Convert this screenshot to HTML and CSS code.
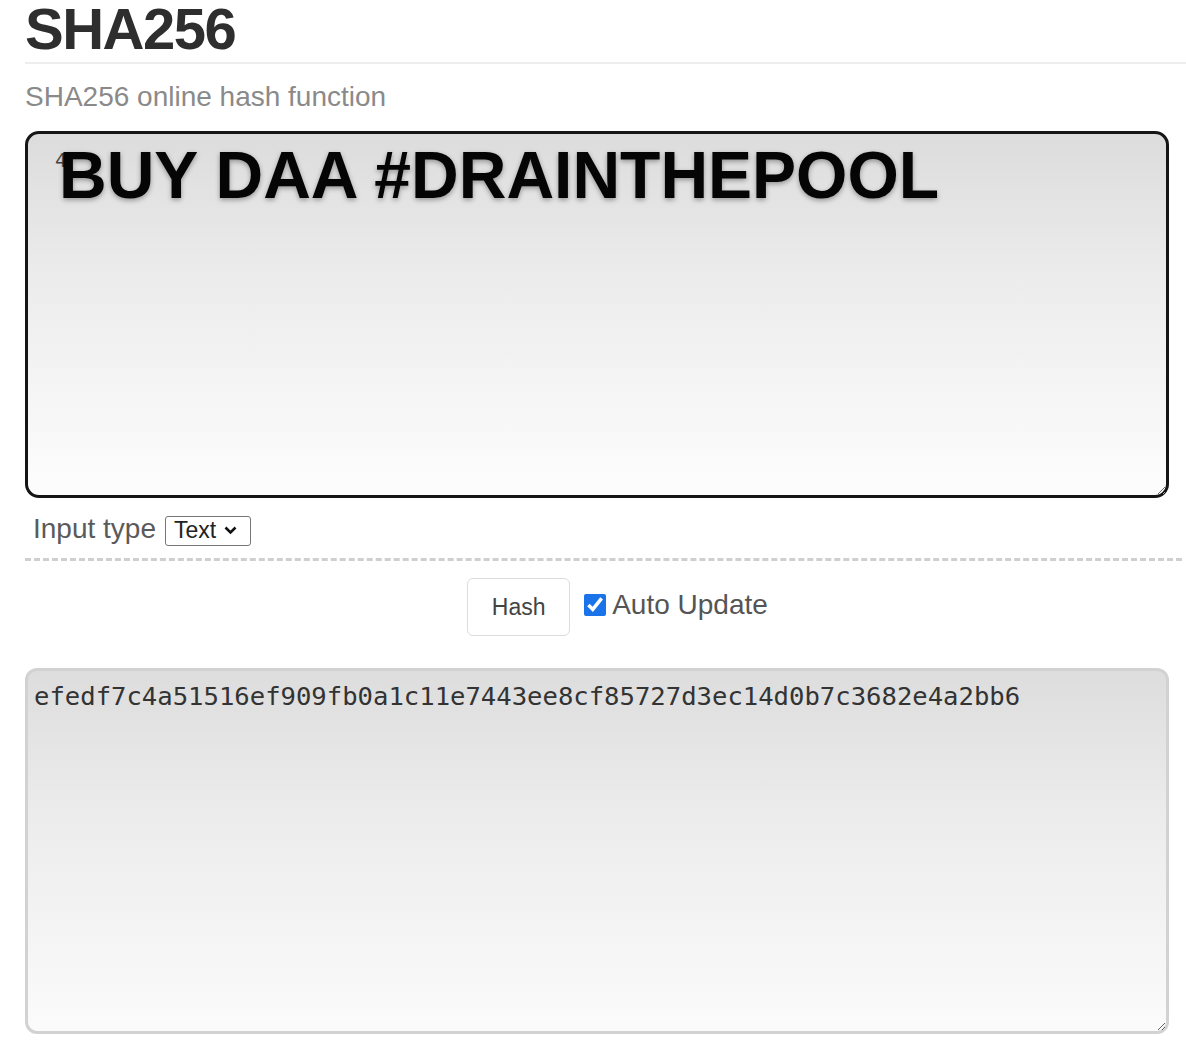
FILE: index.html
```html
<!DOCTYPE html>
<html>
<head>
<meta charset="utf-8">
<link rel="stylesheet" href="styles.css">
</head>
<body>
<main class="page">
  <h1 class="title">SHA256</h1>
  <p class="subtitle">SHA256 online hash function</p>
  <div class="input-wrap">
    <textarea class="input-area">4</textarea>
    <div class="overlay-text">BUY DAA #DRAINTHEPOOL</div>
  </div>
  <div class="type-row">
    <span class="type-label">Input type</span>
    <span class="select">Text
      <svg class="chev" width="13" height="9" viewBox="0 0 13 9"><path d="M1.5 1.5 L6.5 6.5 L11.5 1.5" fill="none" stroke="#111" stroke-width="2.6"/></svg>
    </span>
  </div>
  <div class="dash"></div>
  <div class="action-row">
    <button class="hash-btn">Hash</button>
    <label class="auto"><input type="checkbox" class="check" checked><span>Auto Update</span></label>
  </div>
  <textarea class="output-area">efedf7c4a51516ef909fb0a1c11e7443ee8cf85727d3ec14d0b7c3682e4a2bb6</textarea>
</main>
</body>
</html>
```
FILE: styles.css
```css
html, body {
  margin: 0;
  padding: 0;
  background: #fff;
  overflow: hidden;
}
body {
  font-family: "Liberation Sans", Arial, sans-serif;
}
.page {
  margin-left: 25px;
  width: 1185px;
  display: flex;
  flex-direction: column;
}
.title {
  margin: 0;
  font-size: 58px;
  line-height: 58px;
  font-weight: 700;
  letter-spacing: -1.5px;
  color: #2e2e2e;
  padding-bottom: 4px;
  border-bottom: 2px solid #eeeeee;
}
.subtitle {
  margin: 17px 0 0 0;
  font-size: 28px;
  line-height: 32px;
  color: #8a8a8a;
}
.input-wrap {
  position: relative;
  margin-top: 18px;
  width: 1144px;
  height: 367px;
}
.input-area {
  box-sizing: border-box;
  width: 1144px;
  height: 367px;
  border: 3px solid #151515;
  border-radius: 14px;
  background: linear-gradient(#dcdcdc, #ececec 40%, #fdfdfd);
  padding: 14px 27px;
  font-family: "DejaVu Sans Mono", monospace;
  font-size: 20px;
  color: #444;
  resize: both;
  display: block;
  outline: none;
}
.overlay-text {
  position: absolute;
  left: 34px;
  top: 12px;
  font-size: 66px;
  line-height: 64px;
  font-weight: 700;
  color: #050505;
  text-shadow: 0 2px 5px rgba(0,0,0,0.35);
  white-space: nowrap;
}
.type-row {
  margin-top: 15px;
  display: flex;
  align-items: center;
  gap: 9px;
  padding-left: 8px;
  height: 32px;
}
.type-label {
  font-size: 28px;
  line-height: 32px;
  color: #5a5a5a;
}
.select {
  box-sizing: border-box;
  height: 30px;
  width: 86px;
  border: 1px solid #767676;
  border-radius: 3px;
  display: flex;
  align-items: center;
  padding-left: 8px;
  gap: 8px;
  font-size: 23px;
  color: #222;
  margin-top: 3px;
}
.dash {
  margin-top: 13px;
  width: 1157px;
  border-top: 3px dashed #cfcfcf;
}
.action-row {
  margin-top: 17px;
  display: flex;
  justify-content: center;
  align-items: flex-start;
  gap: 14px;
}
.hash-btn {
  box-sizing: border-box;
  width: 103px;
  height: 58px;
  border: 1px solid #dcdcdc;
  border-radius: 6px;
  background: #fff;
  font-family: "Liberation Sans", Arial, sans-serif;
  font-size: 23px;
  color: #444;
  padding: 0;
}
.auto {
  display: flex;
  align-items: center;
  gap: 6px;
  margin-top: 11px;
  font-size: 28px;
  line-height: 32px;
  color: #555;
}
.check {
  width: 22px;
  height: 22px;
  margin: 0;
  accent-color: #1a73e8;
}
.output-area {
  margin-top: 32px;
  box-sizing: border-box;
  width: 1144px;
  height: 366px;
  border: 3px solid #d2d2d2;
  border-radius: 12px;
  background: linear-gradient(#dddddd, #ececec 40%, #fbfbfb);
  padding: 8px 6px;
  font-family: "DejaVu Sans Mono", monospace;
  font-size: 25.6px;
  line-height: 34px;
  color: #333;
  resize: both;
  display: block;
  outline: none;
}
```
